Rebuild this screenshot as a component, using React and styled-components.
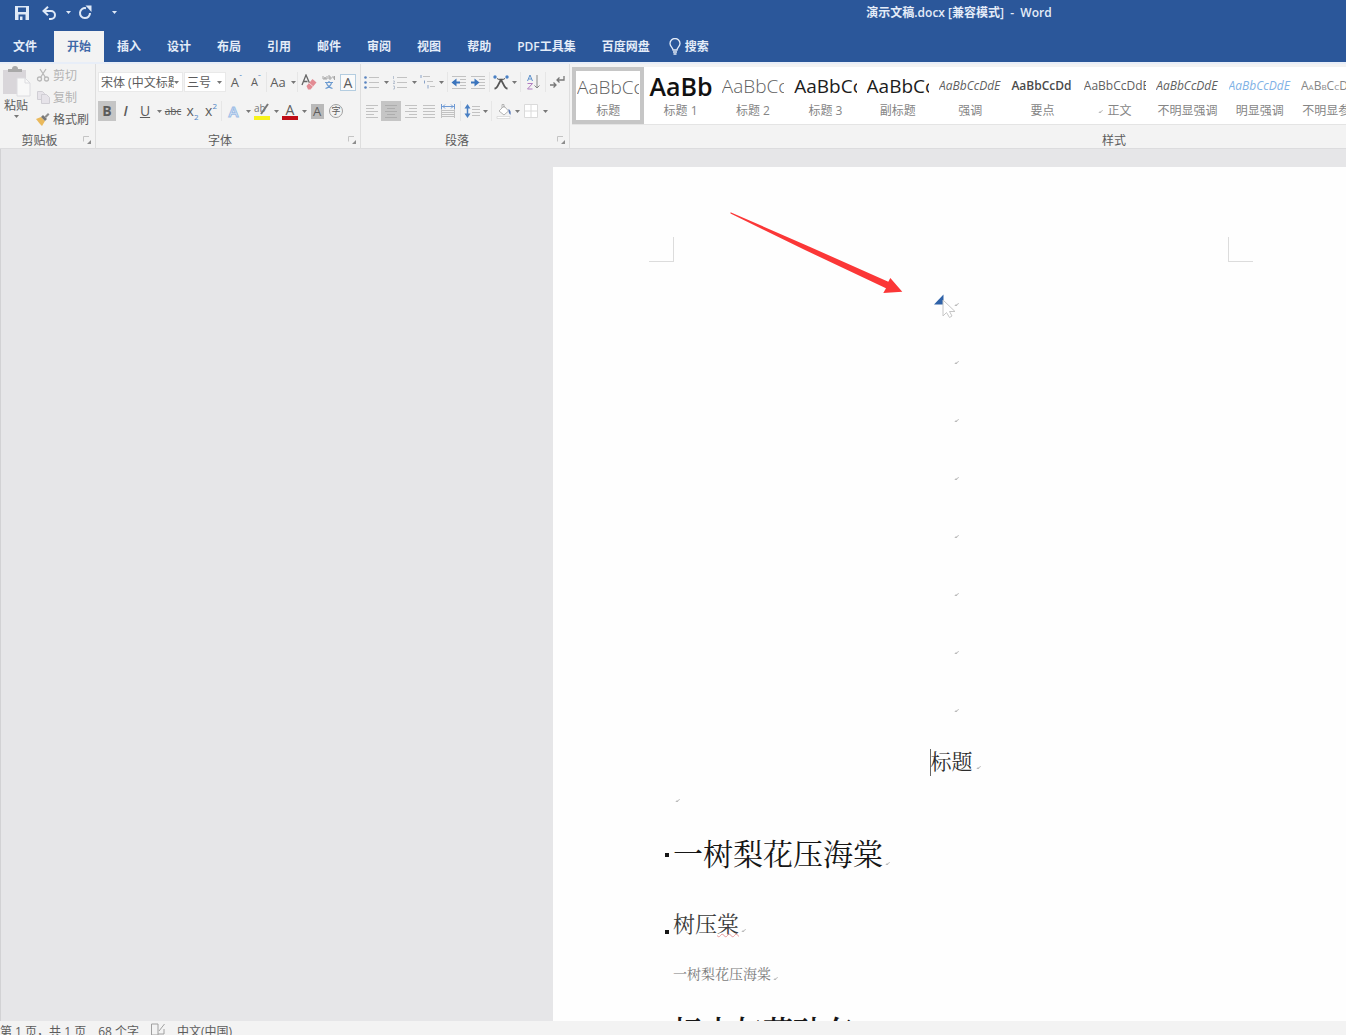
import React from 'react';
import styled, { createGlobalStyle } from 'styled-components';

const blue = '#2b579a';
const ribbonBg = '#f3f3f3';
const deskBg = '#e6e6e8';
const pageBg = '#fefefe';
const textColor = '#5c5c5c';
const mutedColor = '#b4b4b4';
const lineColor = '#dedede';

const uiFont = '"Open Sans", "Noto Sans CJK SC", sans-serif';
const docFont = '"Liberation Serif", "Noto Serif CJK SC", "Noto Sans CJK SC", serif';

const GlobalStyle = createGlobalStyle`
  * { box-sizing: border-box; }
  body {
    margin: 0;
    background: ${deskBg};
    font-family: ${uiFont};
    font-size: 12px;
    color: ${textColor};
  }
  button, select {
    font: inherit;
    color: inherit;
    border: 0;
    padding: 0;
    margin: 0;
    background: none;
  }
  svg { display: block; flex: none; }
`;

const Shell = styled.div`
  height: 100vh;
  display: flex;
  flex-direction: column;
  overflow: hidden;
`;

/* title bar */

const TitleBar = styled.header`
  display: grid;
  grid-template-columns: 572px 1fr;
  align-items: center;
  height: 31px;
  padding-bottom: 6px;
  flex: none;
  background: ${blue};
  color: #e4ecf8;
`;

const QuickAccess = styled.div`
  display: flex;
  align-items: center;
  padding-left: 12px;
`;

const QuickButton = styled.button`
  display: flex;
  align-items: center;
  justify-content: center;
  width: ${props => props.$width}px;
  height: 22px;
`;

const WindowTitle = styled.div`
  text-align: center;
  white-space: pre;
  line-height: 20px;
  font-weight: 600;
`;

/* tabs */

const TabStrip = styled.nav`
  display: flex;
  height: 31px;
  flex: none;
  background: ${blue};
`;

const Tab = styled.button`
  display: flex;
  align-items: center;
  gap: 4px;
  padding: 0 13px;
  line-height: 20px;
  white-space: nowrap;
  font-weight: 600;
  color: ${props => (props.$active ? '#3f69a8' : '#e4ecf8')};
  background: ${props => (props.$active ? ribbonBg : 'transparent')};
`;

const FileTab = styled(Tab)`
  width: 54px;
`;

const SearchTab = styled(Tab)`
  padding: 0 6px;
`;

/* ribbon */

const Ribbon = styled.section`
  display: grid;
  grid-template-columns: 96px 265px 209px 1089px;
  height: 87px;
  flex: none;
  background: ${ribbonBg};
  border-top: 2px solid #e8eef8;
  border-bottom: 1px solid #dcdcde;
`;

const GroupBox = styled.div`
  display: flex;
  flex-direction: column;
  min-width: 0;
  border-right: 1px solid ${lineColor};
`;

const GroupBody = styled.div`
  flex: 1;
  min-height: 0;
  padding-left: ${props => props.$pad || 0}px;
`;

const GroupFooter = styled.div`
  display: grid;
  grid-template-columns: 1fr auto;
  align-items: center;
  flex: none;
  height: 20px;
  text-align: center;
`;

const Row = styled.div`
  display: flex;
  align-items: center;
  padding-top: ${props => (props.$first ? 6 : 0)}px;
  height: ${props => (props.$first ? 30 : 34)}px;
`;

const ToolButton = styled.button`
  display: flex;
  align-items: center;
  justify-content: center;
  flex: none;
  width: ${props => props.$width}px;
  height: 20px;
  background: ${props => (props.$pressed ? '#c5c5c5' : 'transparent')};
`;

const CaretButton = styled(ToolButton)`
  width: 8px;
`;

const Separator = styled.span`
  flex: none;
  width: 1px;
  height: 20px;
  margin: 0 ${props => props.$space || 0}px;
  background: #e6e6e6;
`;

const SelectBox = styled.label`
  display: flex;
  align-items: center;
  flex: none;
  width: ${props => props.$width}px;
  height: 20px;
  margin-right: 1px;
  padding-right: 3px;
  background: #fff;
  border: 1px solid #e9e9e9;
`;

const Select = styled.select`
  flex: 1;
  min-width: 0;
  height: 18px;
  padding-left: 2px;
  appearance: none;
  overflow: hidden;
`;

const Letter = styled.span`
  font-size: ${props => props.$size || 14}px;
  line-height: 18px;
  font-weight: ${props => props.$weight || 400};
  font-style: ${props => (props.$italic ? 'italic' : 'normal')};
  text-decoration: ${props => props.$line || 'none'};
`;

const Script = styled.span`
  align-self: ${props => (props.$up ? 'flex-start' : 'flex-end')};
  font-size: 8px;
  line-height: 9px;
  color: #4f83c4;
`;

const BoxedLetter = styled.span`
  width: 16px;
  height: 17px;
  font-size: 14px;
  line-height: 15px;
  border: 1px solid #b4cde0;
  background: #fafafa;
`;

const ShadedLetter = styled.span`
  width: 13px;
  height: 15px;
  font-size: 13px;
  line-height: 15px;
  background: #b9b9b9;
`;

const CircledLetter = styled.span`
  width: 14px;
  height: 14px;
  font-size: 9px;
  line-height: 12px;
  border: 1px solid #a0a0a0;
  border-radius: 50%;
`;

const ColorLetter = styled.span`
  width: 16px;
  height: 17px;
  font-size: 14px;
  line-height: 14px;
  border-bottom: 4px solid ${props => props.$color};
`;

const OutlineLetter = styled.span`
  font-size: 15px;
  line-height: 18px;
  font-weight: 600;
  color: #eef4fc;
  -webkit-text-stroke: 1px #9dbde6;
`;

const ClipboardTools = styled.div`
  display: flex;
  gap: 4px;
`;

const PasteButton = styled.button`
  display: flex;
  flex-direction: column;
  align-items: center;
  width: 32px;
  padding-top: 2px;
  line-height: 18px;
`;

const ClipboardList = styled.div`
  display: flex;
  flex-direction: column;
`;

const ClipboardButton = styled.button`
  display: flex;
  align-items: center;
  gap: 3px;
  height: 22px;
  white-space: nowrap;
  color: ${props => (props.disabled ? mutedColor : textColor)};
`;

/* style gallery */

const Gallery = styled.div`
  display: grid;
  grid-template-columns: repeat(15, 1fr);
  flex: none;
  height: 58px;
  margin: 3px 0 0 2px;
  background: #fff;
  border-bottom: 1px solid #e4e4e4;
`;

const StyleCard = styled.button`
  display: flex;
  flex-direction: column;
  align-items: center;
  justify-content: flex-end;
  overflow: hidden;
  padding: ${props => (props.$selected ? '0 1px 0' : '0 5px 4px')};
  border: ${props => (props.$selected ? '4px solid #c6c6c6' : '0')};
`;

const Preview = styled.span`
  align-self: stretch;
  overflow: hidden;
  height: 32px;
  line-height: 32px;
  text-align: left;
  white-space: nowrap;
  font-size: ${props => props.$size || 12}px;
  font-weight: ${props => props.$weight || 400};
  font-style: ${props => (props.$italic ? 'italic' : 'normal')};
  font-variant: ${props => (props.$caps ? 'small-caps' : 'normal')};
  color: ${props => props.$color || '#5f5f5f'};
`;

const StyleName = styled.span`
  display: flex;
  align-items: center;
  gap: 4px;
  line-height: 18px;
  white-space: nowrap;
  color: #858585;
`;

/* document */

const Desk = styled.main`
  flex: 1;
  min-height: 0;
  overflow: hidden;
  padding: 18px 0 0 552px;
  background: ${deskBg};
  border-left: 1px solid #d2d2d4;
`;

const Paper = styled.article`
  position: relative;
  width: 796px;
  min-height: 1123px;
  padding: 70px 96px 0;
  background: ${pageBg};
  color: #2c2c2c;
  font-family: ${docFont};
`;

const MarginCorners = styled.div`
  display: flex;
  justify-content: space-between;
  height: 25px;
`;

const Corner = styled.span`
  width: 25px;
  border-bottom: 1px solid #dcdcdc;
  border-left: ${props => (props.$right ? '1px solid #dcdcdc' : '0')};
  border-right: ${props => (props.$right ? '0' : '1px solid #dcdcdc')};
`;

const TextArea = styled.div`
  padding: 13px 24px 0;
`;

const EmptyLine = styled.p`
  display: flex;
  align-items: center;
  justify-content: ${props => (props.$left ? 'flex-start' : 'center')};
  height: ${props => props.$height}px;
  margin: 0;
  padding-left: ${props => (props.$left ? 2 : 10)}px;
`;

const DocTitle = styled.h1`
  display: flex;
  align-items: center;
  justify-content: center;
  gap: 3px;
  margin: 0;
  padding-left: 8px;
  font-size: 21px;
  line-height: 46px;
  font-weight: 400;
`;

const TextCursor = styled.span`
  width: 1px;
  height: 27px;
  margin-right: -3px;
  background: #666;
`;

const Heading = styled.h2`
  display: flex;
  align-items: center;
  gap: 2px;
  margin: 0 0 0 -8px;
  font-size: ${props => props.$size}px;
  line-height: ${props => props.$line}px;
  font-weight: ${props => props.$weight || 400};
  color: ${props => props.$color || '#161616'};
`;

const Bullet = styled.span`
  width: 4px;
  height: 4px;
  margin-right: 2px;
  margin-top: ${props => (props.$low ? 14 : 0)}px;
  background: #161616;
`;

const Paragraph = styled.p`
  display: flex;
  align-items: center;
  gap: 2px;
  margin: 0;
  font-size: 14px;
  line-height: 40px;
  color: #7c7c7c;
`;

const Misspelled = styled.span`
  text-decoration: underline wavy #e79a9a 1px;
  text-underline-offset: 1px;
`;

const MarkIcon = styled.svg`
  margin-top: ${props => props.$drop || 0}px;
`;

const ArrowMark = styled.svg`
  position: absolute;
  left: 176px;
  top: 44px;
`;

const Pointer = styled.svg`
  position: absolute;
  left: 380px;
  top: 126px;
`;

const StatusBar = styled.footer`
  display: flex;
  gap: 12px;
  flex: none;
  height: 14px;
  overflow: hidden;
  background: ${ribbonBg};
  line-height: 22px;
  white-space: nowrap;
`;

const Caret = ({ color = '#777' }) => (
  <svg width="5" height="3" viewBox="0 0 5 3" aria-hidden="true">
    <path d="M0 0h5L2.5 3z" fill={color} />
  </svg>
);

const Launcher = () => (
  <ToolButton $width={16} aria-label="更多选项">
    <svg width="8" height="8" viewBox="0 0 8 8">
      <path d="M.5 5.5V.5H6" fill="none" stroke="#c4c4c4" />
      <path d="M8 4v4H4z" fill="#8d8d8d" />
    </svg>
  </ToolButton>
);

const Mark = ({ drop }) => (
  <MarkIcon $drop={drop} width="5" height="5" viewBox="0 0 5 5" aria-hidden="true">
    <path d="M4.5 1L3.5 2.7 1 3.5M2 2.5l-1 1h2" fill="none" stroke="#bcbcbc" />
  </MarkIcon>
);

const Lines = ({ rows, color = '#c2c2c2', children }) => (
  <svg width="16" height="16" viewBox="0 0 16 16">
    {rows.map(([x, y, w]) => (
      <rect key={`${x}-${y}`} x={x} y={y} width={w} height="1" fill={color} />
    ))}
    {children}
  </svg>
);

const BulletsIcon = () => (
  <Lines rows={[[5, 3, 10], [5, 8, 10], [5, 13, 10]]}>
    <g fill="#5a84bf">
      <circle cx="1.5" cy="3.5" r="1.3" />
      <circle cx="1.5" cy="8.5" r="1.3" />
      <circle cx="1.5" cy="13.5" r="1.3" />
    </g>
  </Lines>
);

const NumberingIcon = () => (
  <Lines rows={[[5, 3, 10], [5, 8, 10], [5, 13, 10]]}>
    <path d="M1.5 2v3M1 7h1.5v1.2L1 9.5h2M1 12h1.5v3H1" fill="none" stroke="#a9b6c8" strokeWidth="0.8" />
  </Lines>
);

const MultilevelIcon = () => (
  <Lines rows={[[3, 2, 7], [7, 7, 6], [10, 12, 5]]}>
    <path d="M1 1v3M4.5 6.5v3M8 11v3.5" stroke="#8aa3c8" />
  </Lines>
);

const IndentIcon = ({ out }) => (
  <Lines rows={[[1, 2, 14], [9, 5, 6], [9, 8, 6], [9, 11, 6], [1, 14, 14]]}>
    <path d={out ? 'M9 8.5H2' : 'M1 8.5h6'} stroke="#3a74bd" strokeWidth="2" />
    <path d={out ? 'M5.5 4.5v8l-5-4z' : 'M4.5 4.5v8l5-4z'} fill="#3a74bd" />
  </Lines>
);

const fullRows = [2, 5, 8, 11, 14];
const AlignIcon = ({ kind }) => (
  <Lines
    color={kind === 'center' ? '#adadad' : undefined}
    rows={fullRows.map((y, i) => {
      const w = i % 2 && kind !== 'justify' ? 8 : 12;
      const x = { left: 2, right: 14 - w, center: 8 - w / 2, justify: 2 }[kind];
      return [x, y, w];
    })}
  />
);

const styleCards = [
  { name: '标题', sample: 'AaBbCc', size: 19, weight: 300, selected: true },
  { name: '标题 1', sample: 'AaBb', size: 25, weight: 600, color: '#111' },
  { name: '标题 2', sample: 'AaBbCc', size: 19, weight: 300 },
  { name: '标题 3', sample: 'AaBbCc', size: 19, weight: 500, color: '#1c1c1c' },
  { name: '副标题', sample: 'AaBbCc', size: 19, weight: 500, color: '#1c1c1c' },
  { name: '强调', sample: 'AaBbCcDdE', italic: true },
  { name: '要点', sample: 'AaBbCcDd', weight: 600, color: '#4a4a4a' },
  { name: '正文', sample: 'AaBbCcDdE', mark: true },
  { name: '不明显强调', sample: 'AaBbCcDdE', italic: true },
  { name: '明显强调', sample: 'AaBbCcDdE', italic: true, color: '#7fb2e6' },
  { name: '不明显参考', sample: 'AaBbCcDdE', caps: true, color: '#868686' },
];

const tabs = ['插入', '设计', '布局', '引用', '邮件', '审阅', '视图', '帮助', 'PDF工具集', '百度网盘'];

const Group = ({ title, pad, children }) => (
  <GroupBox>
    <GroupBody $pad={pad}>{children}</GroupBody>
    <GroupFooter>
      <span>{title}</span>
      <Launcher />
    </GroupFooter>
  </GroupBox>
);

const Drop = ({ label }) => (
  <CaretButton aria-label={label}>
    <Caret />
  </CaretButton>
);

const ClipboardGroup = () => (
  <Group title="剪贴板" pad={0}>
    <ClipboardTools>
      <PasteButton>
        <svg width="29" height="31" viewBox="0 0 29 31">
          <path d="M1 4h23v24H1z" fill="#d9d6da" />
          <path d="M6 6V3h4a3 3 0 0 1 6 0h4v3z" fill="#a9a9a9" />
          <path d="M15 12h8l5 5v13H15z" fill="#f8f8f8" stroke="#dcdce0" />
          <path d="M23 12v5h5" fill="none" stroke="#dcdce0" />
        </svg>
        粘贴
        <Caret />
      </PasteButton>
      <ClipboardList>
        <ClipboardButton disabled>
          <svg width="14" height="14" viewBox="0 0 14 14" fill="none" stroke="#b9b9b9" strokeWidth="1.3">
            <path d="M4 1l5.5 8.5M10 1L4.5 9.5" />
            <circle cx="3.5" cy="11" r="2" />
            <circle cx="10.5" cy="11" r="2" />
          </svg>
          剪切
        </ClipboardButton>
        <ClipboardButton disabled>
          <svg width="14" height="14" viewBox="0 0 14 14" fill="#e6e3e9" stroke="#d0ced4">
            <path d="M1.5 1.5h5l2 2v6h-7z" />
            <path d="M5.5 4.5h5l3 3v6h-8z" />
          </svg>
          复制
        </ClipboardButton>
        <ClipboardButton>
          <svg width="14" height="14" viewBox="0 0 14 14">
            <path d="M0 7l5-2 4 4-3 5-2-2z" fill="#eab95c" />
            <path d="M5 5l2-2 4 4-2 2z" fill="#777" />
            <path d="M8.5 4.5L12 1l1.5 1.5L10 6z" fill="#8e8e8e" />
          </svg>
          格式刷
        </ClipboardButton>
      </ClipboardList>
    </ClipboardTools>
  </Group>
);

const FontGroup = () => (
  <Group title="字体" pad={2}>
    <Row $first>
      <SelectBox $width={85}>
        <Select aria-label="字体">
          <option>宋体 (中文标题)</option>
        </Select>
        <Caret />
      </SelectBox>
      <SelectBox $width={42}>
        <Select aria-label="字号">
          <option>三号</option>
        </Select>
        <Caret />
      </SelectBox>
      <ToolButton $width={19} aria-label="增大字号">
        <Letter $size={13}>A</Letter>
        <Script $up>ˆ</Script>
      </ToolButton>
      <ToolButton $width={20} aria-label="减小字号">
        <Letter $size={11}>A</Letter>
        <Script $up>ˇ</Script>
      </ToolButton>
      <Separator />
      <ToolButton $width={22}>
        <Letter $size={13}>Aa</Letter>
      </ToolButton>
      <Drop label="更改大小写" />
      <Separator />
      <ToolButton $width={22} aria-label="清除格式">
        <svg width="16" height="16" viewBox="0 0 16 16">
          <path d="M1 11L5 1l3.5 8M2.5 7.5h4" fill="none" stroke="#666" strokeWidth="1.3" />
          <path d="M5.5 12l6-7 4 3.5-6 7H7z" fill="#e38b93" />
          <path d="M8 9l4 3.5" stroke="#f5d5d8" />
        </svg>
      </ToolButton>
      <ToolButton $width={18} aria-label="拼音指南">
        <svg width="14" height="16" viewBox="0 0 14 16" fill="none">
          <path d="M1 2v3h2V3v2h2V2M7 1v4h2V3H7M12.5 2v4M11 2v2h1.5" stroke="#a6a6a6" />
          <path d="M3 8.5h8M7 7v1.5M4.5 9c1 3 3 4.5 6 5.5M9.5 9c-1 3-3 4.5-6 5.5" stroke="#6c9bd0" strokeWidth="1.2" />
        </svg>
      </ToolButton>
      <ToolButton $width={20}>
        <BoxedLetter>A</BoxedLetter>
      </ToolButton>
    </Row>
    <Row>
      <ToolButton $width={18} $pressed>
        <Letter $weight={700}>B</Letter>
      </ToolButton>
      <ToolButton $width={19}>
        <Letter $weight={600} $italic>I</Letter>
      </ToolButton>
      <ToolButton $width={20}>
        <Letter $line="underline">U</Letter>
      </ToolButton>
      <Drop label="下划线样式" />
      <ToolButton $width={20}>
        <Letter $size={10} $line="line-through">abc</Letter>
      </ToolButton>
      <ToolButton $width={19}>
        <Letter $weight={500}>x</Letter>
        <Script>2</Script>
      </ToolButton>
      <ToolButton $width={18}>
        <Letter $weight={500}>x</Letter>
        <Script $up>2</Script>
      </ToolButton>
      <Separator $space={1} />
      <ToolButton $width={21}>
        <OutlineLetter>A</OutlineLetter>
      </ToolButton>
      <Drop label="文本效果" />
      <ToolButton $width={20} aria-label="突出显示">
        <svg width="18" height="18" viewBox="0 0 18 18">
          <text x="1" y="10" fontSize="10" fill="#777">ab</text>
          <path d="M15 2L8 12" stroke="#777" strokeWidth="2" />
          <path d="M1 14h16v4H1z" fill="#f7f31c" />
        </svg>
      </ToolButton>
      <Drop label="突出显示颜色" />
      <ToolButton $width={20}>
        <ColorLetter $color="#c00d17">A</ColorLetter>
      </ToolButton>
      <Drop label="字体颜色" />
      <ToolButton $width={18}>
        <ShadedLetter>A</ShadedLetter>
      </ToolButton>
      <ToolButton $width={20}>
        <CircledLetter>字</CircledLetter>
      </ToolButton>
    </Row>
  </Group>
);

const ParagraphGroup = () => (
  <Group title="段落" pad={1}>
    <Row $first>
      <ToolButton $width={20} aria-label="项目符号"><BulletsIcon /></ToolButton>
      <Drop label="项目符号库" />
      <ToolButton $width={20} aria-label="编号"><NumberingIcon /></ToolButton>
      <Drop label="编号库" />
      <ToolButton $width={19} aria-label="多级列表"><MultilevelIcon /></ToolButton>
      <Drop label="列表库" />
      <Separator $space={2} />
      <ToolButton $width={18} aria-label="减少缩进量"><IndentIcon out /></ToolButton>
      <ToolButton $width={19} aria-label="增加缩进量"><IndentIcon /></ToolButton>
      <Separator $space={2} />
      <ToolButton $width={18} aria-label="中文版式">
        <svg width="16" height="16" viewBox="0 0 16 16">
          <path d="M1.5 14.5c4 0 4-8 8-9.5M14.5 14.5c-4 0-4-8-8-9.5" fill="none" stroke="#555" strokeWidth="1.8" />
          <path d="M4 4.5l4 2 4-2" fill="none" stroke="#555" />
          <circle cx="2" cy="3" r="1.7" fill="#4a80c4" />
          <circle cx="14" cy="3" r="1.7" fill="#4a80c4" />
        </svg>
      </ToolButton>
      <Drop label="中文版式选项" />
      <Separator $space={2} />
      <ToolButton $width={20} aria-label="排序">
        <svg width="14" height="16" viewBox="0 0 14 16" fill="none">
          <path d="M1.5 7L4 1l2.5 6M2.5 5h3" stroke="#5f92cc" />
          <path d="M1.5 9.5h5l-5 5.5h5" stroke="#b07cc0" />
          <path d="M11 1v13M8.5 11.5L11 14l2.500-2.500" stroke="#888" />
        </svg>
      </ToolButton>
      <Separator $space={2} />
      <ToolButton $width={18} aria-label="显示编辑标记">
        <svg width="15" height="14" viewBox="0 0 15 14" fill="none" stroke="#777" strokeWidth="1.3">
          <path d="M14 1v4H7M9.5 2.5L7 5l2.5 2.5" />
          <path d="M0 10h6M3.5 7.5L6 10l-2.500 2.500" />
        </svg>
      </ToolButton>
    </Row>
    <Row>
      <ToolButton $width={19} aria-label="左对齐"><AlignIcon kind="left" /></ToolButton>
      <ToolButton $width={20} aria-label="居中" $pressed><AlignIcon kind="center" /></ToolButton>
      <ToolButton $width={19} aria-label="右对齐"><AlignIcon kind="right" /></ToolButton>
      <ToolButton $width={18} aria-label="两端对齐"><AlignIcon kind="justify" /></ToolButton>
      <ToolButton $width={20} aria-label="分散对齐">
        <Lines rows={[[2, 7, 12], [2, 9, 12], [2, 11, 12], [2, 13, 12]]}>
          <path d="M1.5 1v5M14.5 1v5M2 3.5h12M5 1.5l-2 2 2 2M11 1.5l2 2-2 2" fill="none" stroke="#6f9ad4" />
          <path d="M1.5 6v9M14.5 6v9" stroke="#c2c2c2" />
        </Lines>
      </ToolButton>
      <Separator $space={2} />
      <ToolButton $width={18} aria-label="行距">
        <Lines rows={[[8, 3, 8], [8, 6, 8], [8, 9, 8], [8, 12, 8]]}>
          <path d="M3.5 3v10" stroke="#4a80c4" strokeWidth="1.5" />
          <path d="M.5 5.5l3-4.5 3 4.5zM.5 10.5l3 4.5 3-4.5z" fill="#4a80c4" />
        </Lines>
      </ToolButton>
      <Drop label="行距选项" />
      <Separator $space={2} />
      <ToolButton $width={19} aria-label="底纹">
        <svg width="16" height="16" viewBox="0 0 16 16">
          <path d="M3 8l5-5 4.5 5L8 12z" fill="#fff" stroke="#b4b4b4" />
          <path d="M8 5V1.5H6V5" fill="none" stroke="#b4b4b4" />
          <path d="M12.5 6c2 1 2.500 3 2 6-1-1-2-2-2-6" fill="#5677b8" />
          <path d="M1 13.5h13v2H1z" fill="#fff" stroke="#ccc" strokeWidth="0.6" />
        </svg>
      </ToolButton>
      <Drop label="底纹颜色" />
      <ToolButton $width={20} aria-label="边框">
        <svg width="14" height="14" viewBox="0 0 14 14">
          <path d="M.5.5h13v13H.5zM7 1v12M1 7h12" fill="#fff" stroke="#dadada" />
        </svg>
      </ToolButton>
      <Drop label="边框选项" />
    </Row>
  </Group>
);

const StylesGroup = () => (
  <GroupBox>
    <Gallery>
      {styleCards.map(card => (
        <StyleCard key={card.name} $selected={card.selected}>
          <Preview
            $size={card.size}
            $weight={card.weight}
            $italic={card.italic}
            $caps={card.caps}
            $color={card.color}
          >
            {card.sample}
          </Preview>
          <StyleName>
            {card.mark && <Mark />}
            {card.name}
          </StyleName>
        </StyleCard>
      ))}
    </Gallery>
    <GroupBody />
    <GroupFooter>
      <span>样式</span>
    </GroupFooter>
  </GroupBox>
);

const Document = () => (
  <Desk>
    <Paper>
      <MarginCorners>
        <Corner />
        <Corner $right />
      </MarginCorners>
      <TextArea>
        {[1, 2, 3, 4, 5, 6, 7, 8].map(n => (
          <EmptyLine key={n} $height={58}>
            <Mark />
          </EmptyLine>
        ))}
        <DocTitle>
          <TextCursor />
          标题
          <Mark drop={10} />
        </DocTitle>
        <EmptyLine $left $height={30}>
          <Mark />
        </EmptyLine>
        <Heading $size={30} $line={80}>
          <Bullet />
          一树梨花压海棠
          <Mark drop={16} />
        </Heading>
        <Heading as="h3" $size={22} $line={60} $color="#3a3a3a">
          <Bullet $low />
          <span>
            树压<Misspelled>棠</Misspelled>
          </span>
          <Mark drop={10} />
        </Heading>
        <Paragraph>
          一树梨花压海棠
          <Mark drop={6} />
        </Paragraph>
        <Heading $size={30} $line={74} $weight={600}>
          <Bullet />
          标少与花砂有
          <Mark drop={16} />
        </Heading>
      </TextArea>
      <ArrowMark width="176" height="84" viewBox="0 0 176 84">
        <path d="M1.500 1.200L80 35.500l79.300 35.200 2-3.700 12 13.700-19 1.300 2.700-4.700L76 39 1.500 2.600z" fill="#fb3737" />
      </ArrowMark>
      <Pointer width="24" height="26" viewBox="0 0 24 26">
        <path d="M1 11.5L10.5 1.500v10z" fill="#2f62a8" />
        <path d="M10 7v16l3.5-3.5 3 5 2.500-1.500-2.500-4.500H22z" fill="#fff" stroke="#c6c6c6" />
      </Pointer>
    </Paper>
  </Desk>
);

const App = () => (
  <Shell>
    <GlobalStyle />
    <TitleBar>
      <QuickAccess>
        <QuickButton $width={20} aria-label="保存">
          <svg width="14" height="14" viewBox="0 0 14 14">
            <path d="M0 0h14v14H0z" fill="#dfe9f7" />
            <path d="M3 1.5h8V6H3zM3.5 8.5h7V14h-7z" fill={blue} />
            <path d="M5 10.5h2.5V14H5z" fill="#dfe9f7" />
          </svg>
        </QuickButton>
        <QuickButton $width={34} aria-label="撤消">
          <svg width="14" height="14" viewBox="0 0 14 14" fill="none" stroke="#dfe9f7" strokeWidth="2">
            <path d="M1.5 5H9a4 4 0 0 1 0 8H7M6 .8L1.500 5 6 9.2" />
          </svg>
        </QuickButton>
        <QuickButton $width={4} aria-label="撤消列表">
          <Caret color="#dfe9f7" />
        </QuickButton>
        <QuickButton $width={30} aria-label="重复">
          <svg width="14" height="15" viewBox="0 0 14 15">
            <path d="M8 3.2a5 5 0 1 0 4 4.8" fill="none" stroke="#dfe9f7" strokeWidth="2" />
            <path d="M7.5.5H13.5V7z" fill="#dfe9f7" />
          </svg>
        </QuickButton>
        <QuickButton $width={28} aria-label="自定义快速访问工具栏">
          <Caret color="#dfe9f7" />
        </QuickButton>
      </QuickAccess>
      <WindowTitle>{'演示文稿.docx [兼容模式]  -  Word'}</WindowTitle>
    </TitleBar>
    <TabStrip>
      <FileTab>文件</FileTab>
      <Tab $active>开始</Tab>
      {tabs.map(tab => (
        <Tab key={tab}>{tab}</Tab>
      ))}
      <SearchTab>
        <svg width="12" height="17" viewBox="0 0 12 17" fill="none" stroke="#e4ecf8" strokeWidth="1.3">
          <path d="M4 12c0-2.5-3-3.5-3-6.5a5 5 0 0 1 10 0c0 3-3 4-3 6.5zM4 14h4M4.5 16h3" />
        </svg>
        搜索
      </SearchTab>
    </TabStrip>
    <Ribbon>
      <ClipboardGroup />
      <FontGroup />
      <ParagraphGroup />
      <StylesGroup />
    </Ribbon>
    <Document />
    <StatusBar>
      <span>第 1 页，共 1 页</span>
      <span>68 个字</span>
      <svg width="14" height="14" viewBox="0 0 14 14" fill="none" stroke="#a0a0a0">
        <path d="M7 3H.5v11H7zM7 13h6V8M8 10l5.5-7" />
      </svg>
      <span>中文(中国)</span>
    </StatusBar>
  </Shell>
);

export default App;
